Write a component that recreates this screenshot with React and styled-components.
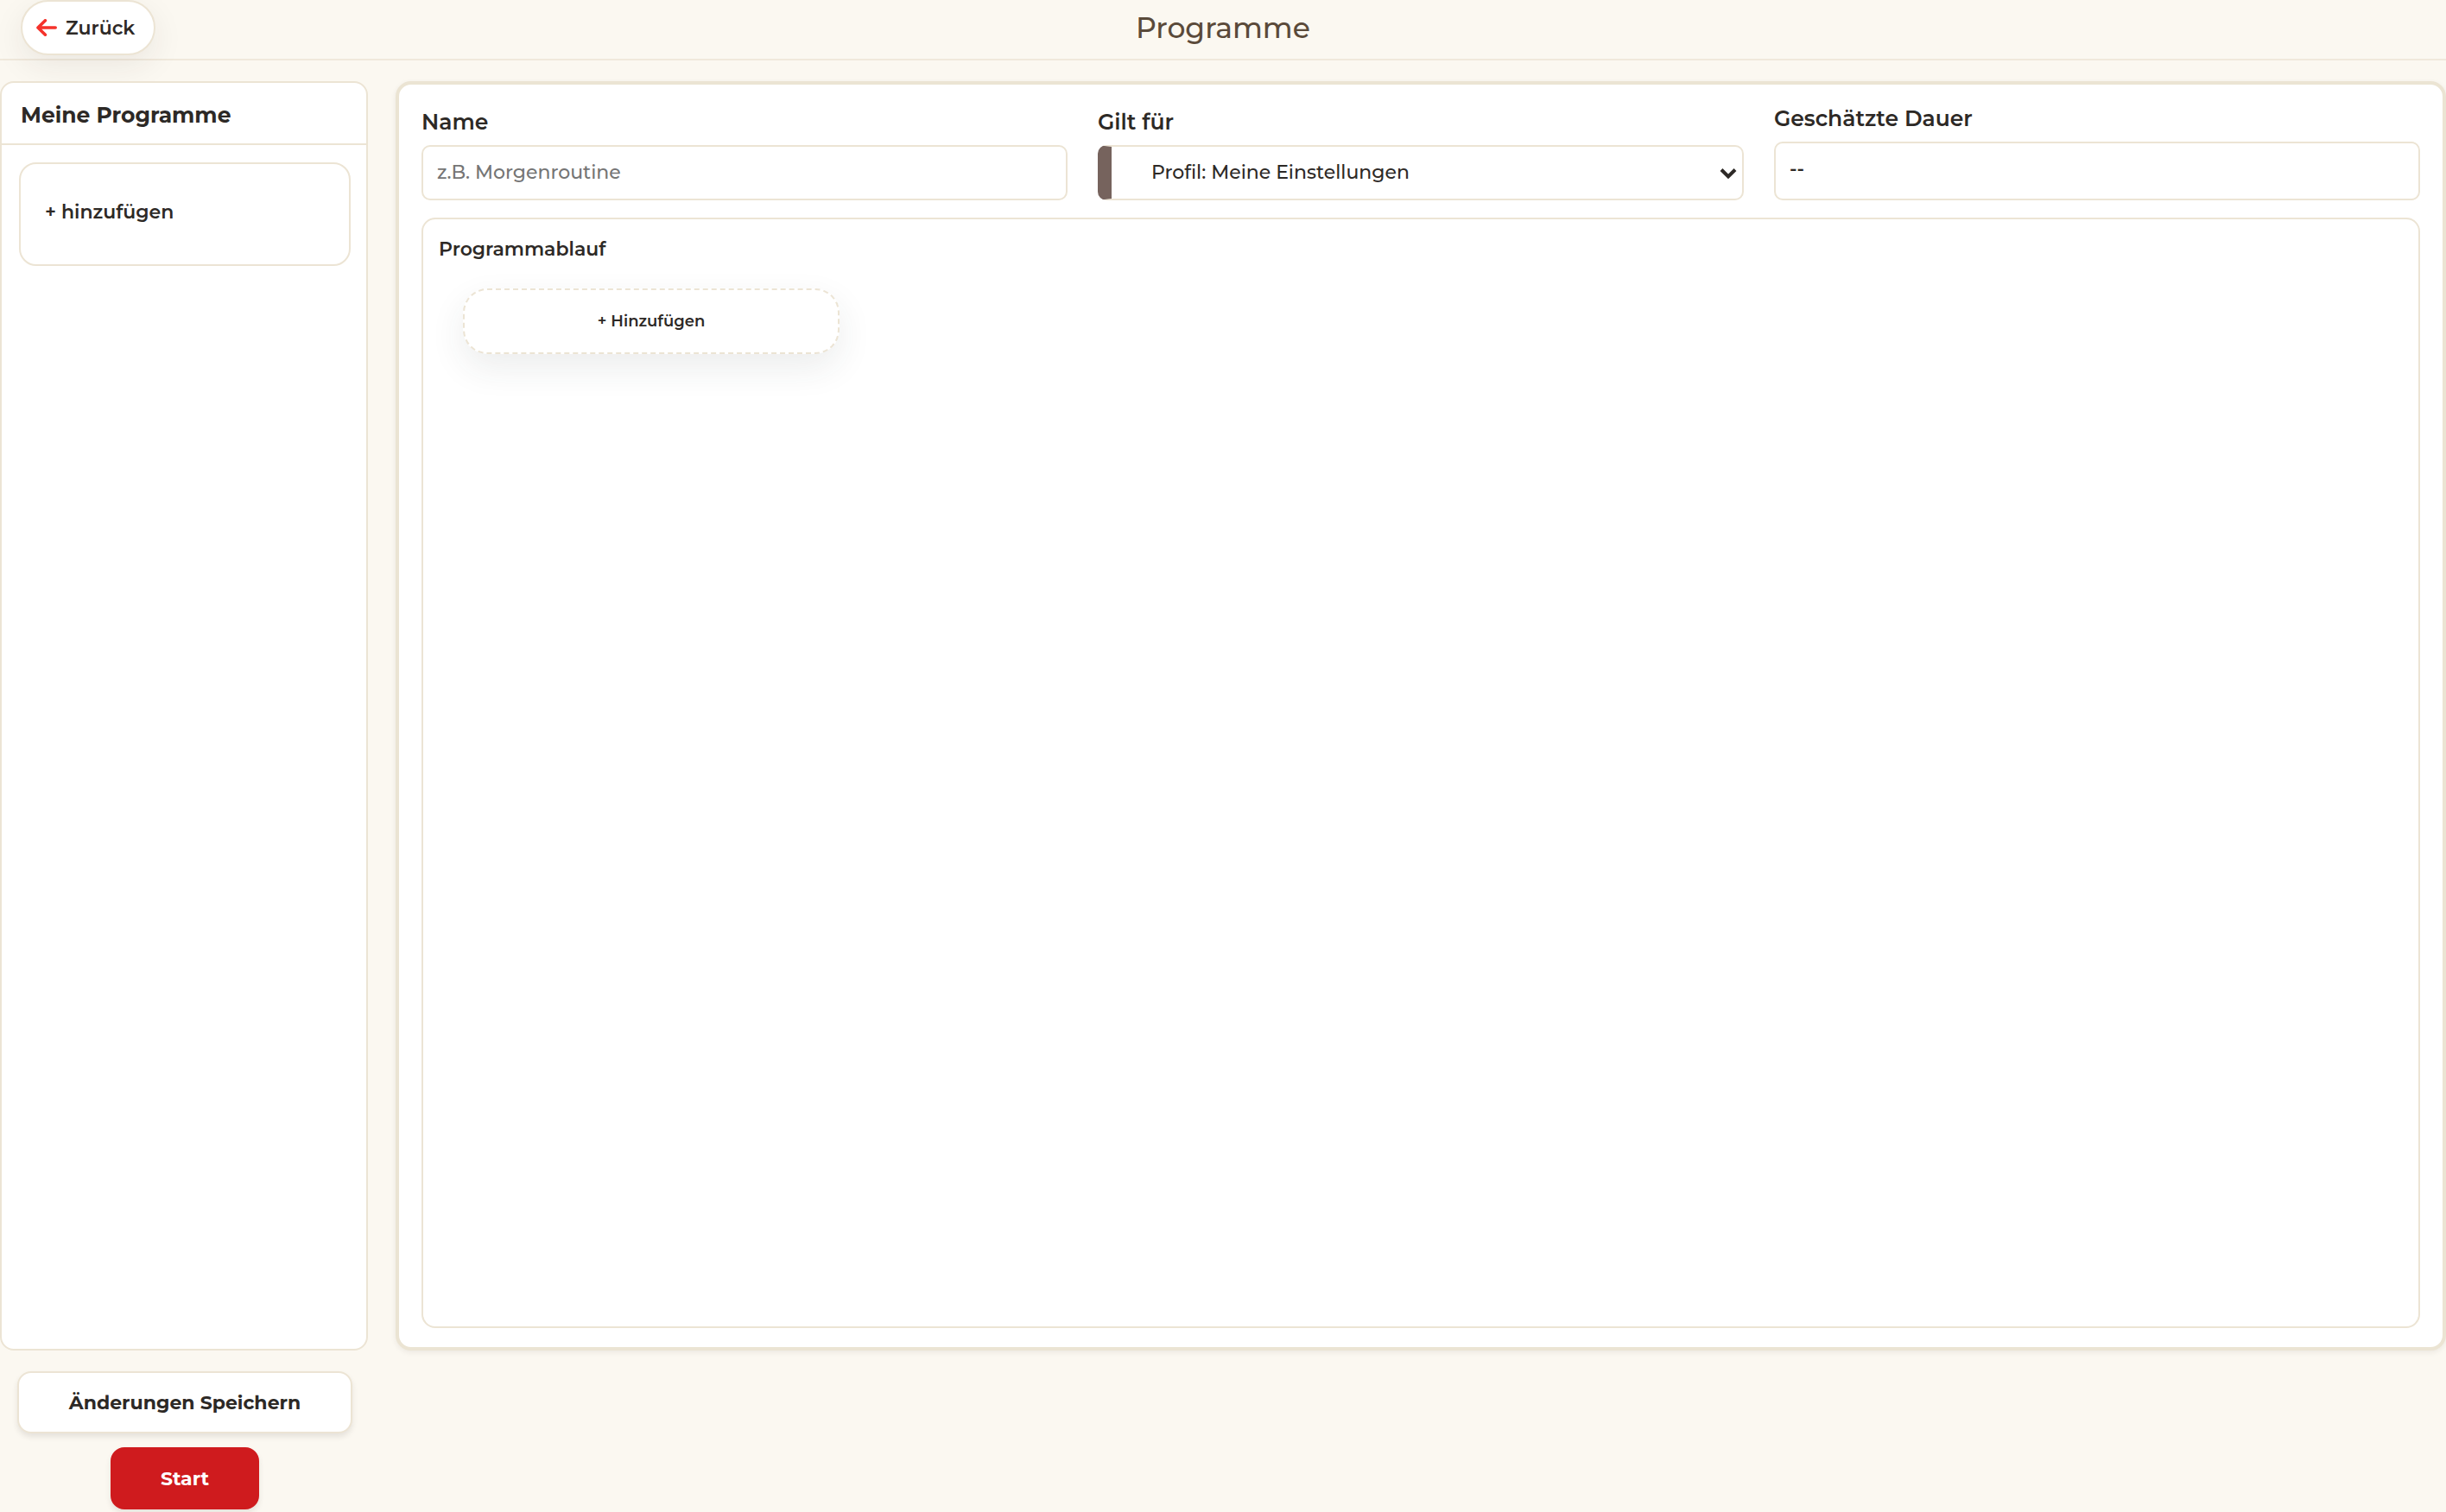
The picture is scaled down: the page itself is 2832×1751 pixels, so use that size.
import { useState } from "react";
import styled, { createGlobalStyle } from "styled-components";

const GlobalStyle = createGlobalStyle`
  *,
  *::before,
  *::after {
    box-sizing: border-box;
  }

  body {
    margin: 0;
    background: #fbf8f1;
    color: #2d2926;
    font-family: Montserrat, Inter, sans-serif;
    font-size: 22px;
    font-weight: 600;
  }

  button,
  input,
  select {
    font: inherit;
    color: inherit;
  }
`;

const Page = styled.div`
  display: flex;
  flex-direction: column;
  min-height: 100vh;
`;

const Header = styled.header`
  display: grid;
  grid-template-columns: 1fr auto 1fr;
  align-items: start;
  padding: 0 24px 4px;
  border-bottom: 2px solid #f0e9dc;
`;

const Title = styled.h1`
  margin: 0;
  color: #5a4a3a;
  font-size: 33px;
  font-weight: 500;
  line-height: 64px;
`;

const BackButton = styled.button`
  display: flex;
  align-items: center;
  justify-self: start;
  gap: 10px;
  height: 64px;
  padding: 0 22px 0 16px;
  border: 2px solid #ece4d4;
  border-radius: 32px;
  background: #fff;
  box-shadow: 0 12px 36px rgba(45, 41, 38, 0.08);
  cursor: pointer;
`;

const Content = styled.main`
  display: grid;
  flex: 1;
  grid-template-columns: 426px 1fr;
  grid-template-rows: 1fr auto;
  gap: 24px 32px;
  padding: 24px 0 3px;
`;

const Sidebar = styled.aside`
  border: 2px solid #ece4d4;
  border-radius: 16px;
  background: #fff;
`;

const SidebarTitle = styled.h2`
  margin: 0;
  padding: 4px 22px 0;
  border-bottom: 2px solid #ece4d4;
  font-size: 25px;
  font-weight: 700;
  line-height: 66px;
`;

const AddProgram = styled.button`
  display: block;
  width: calc(100% - 38px);
  height: 120px;
  margin: 20px 18px 20px 20px;
  padding: 0 28px 6px;
  border: 2px solid #ece4d4;
  border-radius: 20px;
  background: #fff;
  text-align: left;
  cursor: pointer;
`;

const Editor = styled.section`
  display: flex;
  flex-direction: column;
  gap: 20px;
  padding: 22px 26px;
  border: 4px solid #ebe4d3;
  border-radius: 18px;
  background: #fff;
  box-shadow: 0 2px 6px rgba(45, 41, 38, 0.08);
`;

const Fields = styled.div`
  display: grid;
  grid-template-columns: repeat(3, 1fr);
  align-items: end;
  gap: 35px;
`;

const Field = styled.div`
  display: flex;
  flex-direction: column;
  gap: 10px;
`;

const Label = styled.label`
  font-size: 25px;
  font-weight: 600;
  line-height: 34px;
`;

const TextInput = styled.input`
  width: 100%;
  height: 64px;
  padding: 0 16px 2px;
  border: 2px solid #ece4d4;
  border-radius: 10px;
  background: #fff;
  font-weight: 500;

  &::placeholder {
    color: #757575;
    opacity: 1;
  }
`;

const SelectWrap = styled.div`
  position: relative;
`;

const Select = styled.select`
  display: block;
  width: 100%;
  height: 64px;
  padding: 0 46px 2px;
  border: 2px solid #ece4d4;
  border-left: 16px solid #76635d;
  border-radius: 10px;
  background: #fff;
  font-weight: 500;
  appearance: none;
`;

const Chevron = styled.svg`
  position: absolute;
  top: 26px;
  right: 8px;
  pointer-events: none;
`;

const Duration = styled.output`
  height: 68px;
  padding: 0 16px;
  border: 2px solid #ece4d4;
  border-radius: 10px;
  line-height: 60px;
`;

const Flow = styled.section`
  flex: 1;
  padding: 18px;
  border: 2px solid #ece4d4;
  border-radius: 16px;
`;

const FlowTitle = styled.h3`
  margin: 0;
  font-size: 22px;
  font-weight: 600;
  line-height: 34px;
`;

const AddStep = styled.button`
  display: block;
  width: 436px;
  height: 76px;
  margin: 28px;
  padding: 0;
  border: 2px dashed #ece4d4;
  border-radius: 28px;
  background: #fff;
  box-shadow: 0 16px 40px rgba(40, 50, 50, 0.09);
  font-size: 18px;
  cursor: pointer;
`;

const Actions = styled.div`
  display: flex;
  flex-direction: column;
  align-items: center;
  gap: 16px;
  padding: 0 18px 0 20px;
`;

const ActionButton = styled.button`
  width: ${({ $primary }) => ($primary ? "172px" : "100%")};
  height: 72px;
  padding: 0;
  border: 2px solid ${({ $primary }) => ($primary ? "#cf1b1e" : "#ece4d4")};
  border-radius: 16px;
  background: ${({ $primary }) => ($primary ? "#cf1b1e" : "#fff")};
  box-shadow: 0 4px 6px rgba(45, 41, 38, 0.1);
  color: ${({ $primary }) => ($primary ? "#fff" : "#2d2926")};
  font-size: 22px;
  font-weight: 700;
  cursor: pointer;
`;

const App = () => {
  const [name, setName] = useState("");

  return (
    <Page>
      <GlobalStyle />
      <Header>
        <BackButton type="button">
          <svg width="24" height="20" viewBox="0 0 24 20" aria-hidden="true">
            <path
              d="M22.2 10H2M10.4 1.8L2 10l8.4 8.2"
              fill="none"
              stroke="#f5322b"
              strokeWidth="3.6"
              strokeLinecap="round"
              strokeLinejoin="round"
            />
          </svg>
          Zurück
        </BackButton>
        <Title>Programme</Title>
      </Header>
      <Content>
        <Sidebar>
          <SidebarTitle>Meine Programme</SidebarTitle>
          <AddProgram type="button">+ hinzufügen</AddProgram>
        </Sidebar>
        <Editor>
          <Fields>
            <Field>
              <Label htmlFor="name">Name</Label>
              <TextInput
                id="name"
                type="text"
                placeholder="z.B. Morgenroutine"
                value={name}
                onChange={(e) => setName(e.target.value)}
              />
            </Field>
            <Field>
              <Label htmlFor="profile">Gilt für</Label>
              <SelectWrap>
                <Select id="profile">
                  <option>Profil: Meine Einstellungen</option>
                </Select>
                <Chevron width="20" height="14" viewBox="0 0 20 14" aria-hidden="true">
                  <path
                    d="M2 2.5L10 10.5L18 2.5"
                    fill="none"
                    stroke="#2d2926"
                    strokeWidth="4"
                  />
                </Chevron>
              </SelectWrap>
            </Field>
            <Field>
              <Label htmlFor="duration">Geschätzte Dauer</Label>
              <Duration id="duration">--</Duration>
            </Field>
          </Fields>
          <Flow>
            <FlowTitle>Programmablauf</FlowTitle>
            <AddStep type="button">+ Hinzufügen</AddStep>
          </Flow>
        </Editor>
        <Actions>
          <ActionButton type="button">Änderungen Speichern</ActionButton>
          <ActionButton type="button" $primary>
            Start
          </ActionButton>
        </Actions>
      </Content>
    </Page>
  );
};

export default App;
